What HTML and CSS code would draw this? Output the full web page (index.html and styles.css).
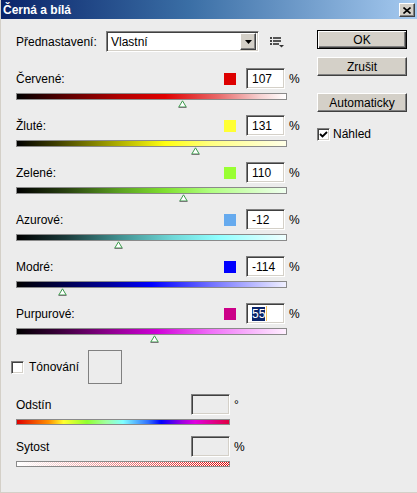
FILE: index.html
```html
<!DOCTYPE html>
<html lang="cs">
<head>
  <meta charset="UTF-8" />
  <title>Černá a bílá</title>
  <link rel="stylesheet" href="styles.css">
</head>
<body>
  <div class="window">
    <div class="titlebar">
      <span class="title">Černá a bílá</span>
      <span class="close">
        <svg width="8" height="7" viewBox="0 0 8 7"><path d="M0.5 0.5 L7.5 6.5 M7.5 0.5 L0.5 6.5" stroke="#000" stroke-width="1.6"/></svg>
      </span>
    </div>

    <div class="body">
      <div class="main">
        <div class="preset-row">
          <span class="preset-label">Přednastavení:</span>
          <div class="select">
            <span class="select-text">Vlastní</span>
            <span class="select-btn">
              <svg width="7" height="4" viewBox="0 0 7 4"><path d="M0 0 H7 L3.5 4 Z" fill="#000"/></svg>
            </span>
          </div>
          <svg class="menu-icon" width="14" height="11" viewBox="0 0 14 11">
            <rect x="0" y="0" width="2" height="2" fill="#444"/><rect x="3" y="0" width="8" height="2" fill="#555"/>
            <rect x="0" y="3" width="2" height="2" fill="#444"/><rect x="3" y="3" width="8" height="2" fill="#555"/>
            <rect x="0" y="6" width="2" height="2" fill="#444"/><rect x="3" y="6" width="6" height="2" fill="#555"/>
            <path d="M9 8 H14 L11.5 10.5 Z" fill="#333"/>
          </svg>
        </div>

        <div class="channel">
          <div class="ch-head">
            <span class="ch-label">Červené:</span>
            <span class="swatch sw-red"></span>
            <span class="field">107</span>
            <span class="unit">%</span>
          </div>
          <div class="bar bar-red"></div>
          <div class="thumb-row"><svg class="thumb" style="--v:0.614" width="9" height="8" viewBox="0 0 9 8"><path d="M4.5 0.8 L8.2 7 H0.8 Z" fill="#fff" stroke="#3a9a4a"/><path d="M0.5 7.5 H8.5" stroke="#777"/></svg></div>
        </div>

        <div class="channel">
          <div class="ch-head">
            <span class="ch-label">Žluté:</span>
            <span class="swatch sw-yellow"></span>
            <span class="field">131</span>
            <span class="unit">%</span>
          </div>
          <div class="bar bar-yellow"></div>
          <div class="thumb-row"><svg class="thumb" style="--v:0.662" width="9" height="8" viewBox="0 0 9 8"><path d="M4.5 0.8 L8.2 7 H0.8 Z" fill="#fff" stroke="#3a9a4a"/><path d="M0.5 7.5 H8.5" stroke="#777"/></svg></div>
        </div>

        <div class="channel">
          <div class="ch-head">
            <span class="ch-label">Zelené:</span>
            <span class="swatch sw-green"></span>
            <span class="field">110</span>
            <span class="unit">%</span>
          </div>
          <div class="bar bar-green"></div>
          <div class="thumb-row"><svg class="thumb" style="--v:0.62" width="9" height="8" viewBox="0 0 9 8"><path d="M4.5 0.8 L8.2 7 H0.8 Z" fill="#fff" stroke="#3a9a4a"/><path d="M0.5 7.5 H8.5" stroke="#777"/></svg></div>
        </div>

        <div class="channel">
          <div class="ch-head">
            <span class="ch-label">Azurové:</span>
            <span class="swatch sw-cyan"></span>
            <span class="field">-12</span>
            <span class="unit">%</span>
          </div>
          <div class="bar bar-cyan"></div>
          <div class="thumb-row"><svg class="thumb" style="--v:0.376" width="9" height="8" viewBox="0 0 9 8"><path d="M4.5 0.8 L8.2 7 H0.8 Z" fill="#fff" stroke="#3a9a4a"/><path d="M0.5 7.5 H8.5" stroke="#777"/></svg></div>
        </div>

        <div class="channel">
          <div class="ch-head">
            <span class="ch-label">Modré:</span>
            <span class="swatch sw-blue"></span>
            <span class="field">-114</span>
            <span class="unit">%</span>
          </div>
          <div class="bar bar-blue"></div>
          <div class="thumb-row"><svg class="thumb" style="--v:0.172" width="9" height="8" viewBox="0 0 9 8"><path d="M4.5 0.8 L8.2 7 H0.8 Z" fill="#fff" stroke="#3a9a4a"/><path d="M0.5 7.5 H8.5" stroke="#777"/></svg></div>
        </div>

        <div class="channel">
          <div class="ch-head">
            <span class="ch-label">Purpurové:</span>
            <span class="swatch sw-magenta"></span>
            <span class="field"><span class="selected">55</span><span class="caret"></span></span>
            <span class="unit">%</span>
          </div>
          <div class="bar bar-magenta"></div>
          <div class="thumb-row"><svg class="thumb" style="--v:0.51" width="9" height="8" viewBox="0 0 9 8"><path d="M4.5 0.8 L8.2 7 H0.8 Z" fill="#fff" stroke="#3a9a4a"/><path d="M0.5 7.5 H8.5" stroke="#777"/></svg></div>
        </div>

        <div class="tint-row">
          <span class="check"></span>
          <span class="tint-label">Tónování</span>
          <span class="tint-swatch"></span>
        </div>

        <div class="tint-field">
          <div class="tf-head">
            <span class="ch-label">Odstín</span>
            <span class="field field-off"></span>
            <span class="unit">°</span>
          </div>
          <div class="bar bar-hue"></div>
        </div>

        <div class="tint-field">
          <div class="tf-head">
            <span class="ch-label">Sytost</span>
            <span class="field field-off"></span>
            <span class="unit">%</span>
          </div>
          <div class="bar bar-sat"></div>
        </div>
      </div>

      <div class="side">
        <button class="btn btn-default">OK</button>
        <button class="btn btn-cancel">Zrušit</button>
        <button class="btn btn-auto">Automaticky</button>
        <label class="preview">
          <span class="check">
            <svg width="9" height="9" viewBox="0 0 9 9"><path d="M1 4 L3.5 6.5 L8 2" fill="none" stroke="#000" stroke-width="1.8"/></svg>
          </span>
          Náhled
        </label>
      </div>
    </div>
  </div>
</body>
</html>
```

FILE: styles.css
```css
* {
  box-sizing: border-box;
}
body {
  margin: 0;
  font-family: "Liberation Sans", Arial, sans-serif;
  font-size: 12px;
  color: #000;
}
.window {
  width: 417px;
  height: 493px;
  background: #ececec;
  border-left: 1px solid #d4d0c8;
  border-bottom: 1px solid #d4d0c8;
}

/* title bar */
.titlebar {
  height: 19px;
  background: linear-gradient(to right, #0a246a, #3a6ea5 45%, #a6caf0);
  display: flex;
  align-items: center;
  justify-content: space-between;
  padding: 0 2px 0 2px;
}
.title {
  color: #fff;
  font-weight: bold;
  font-size: 12px;
}
.close {
  width: 16px;
  height: 14px;
  margin-top: 1px;
  background: #d4d0c8;
  border: 1px solid;
  border-color: #fff #404040 #404040 #fff;
  box-shadow: inset -1px -1px #808080;
  display: flex;
  align-items: center;
  justify-content: center;
}

.body {
  display: flex;
}
.main {
  width: 316px;
  padding: 12px 0 0 15px;
}
.side {
  width: 90px;
  padding-top: 11px;
  display: flex;
  flex-direction: column;
}

/* preset */
.preset-row {
  display: flex;
  align-items: center;
  height: 21px;
  margin-bottom: 16px;
}
.preset-label {
  width: 90px;
}
.select {
  width: 153px;
  height: 21px;
  background: #fff;
  border: 1px solid;
  border-color: #808080 #fff #fff #808080;
  box-shadow: inset 1px 1px #404040, inset -1px -1px #d4d0c8;
  display: flex;
  align-items: center;
  padding: 2px 2px 2px 4px;
}
.select-text {
  flex: 1;
}
.select-btn {
  width: 16px;
  height: 17px;
  background: #d4d0c8;
  border: 1px solid;
  border-color: #fff #404040 #404040 #fff;
  box-shadow: inset -1px -1px #808080;
  display: flex;
  align-items: center;
  justify-content: center;
}
.menu-icon {
  margin-left: 11px;
  margin-top: 2px;
}

/* channel sliders */
.channel {
  width: 285px;
  margin-bottom: 7px;
}
.ch-head, .tf-head {
  display: flex;
  align-items: center;
  height: 21px;
}
.ch-label {
  flex: 1;
}
.swatch {
  width: 12px;
  height: 12px;
  margin-right: 10px;
}
.field {
  width: 39px;
  height: 21px;
  background: #fff;
  border: 1px solid;
  border-color: #808080 #fff #fff #808080;
  box-shadow: inset 1px 1px #404040, inset -1px -1px #d4d0c8;
  padding: 0 0 0 5px;
  display: flex;
  align-items: center;
}
.field-off {
  background: #ececec;
}
.unit {
  width: 12px;
  margin-left: 4px;
}
.selected {
  background: #0a246a;
  color: #fff;
}
.caret {
  width: 1px;
  height: 15px;
  background: #f0c060;
  margin-left: 1px;
}
.sw-red { background: #dd0000; }
.sw-yellow { background: #ffff33; }
.sw-green { background: #99ff33; }
.sw-cyan { background: #66aaee; }
.sw-blue { background: #0000ff; }
.sw-magenta { background: #cc0088; }

.bar {
  width: 271px;
  height: 7px;
  margin-top: 4px;
  border: 1px solid #8a8a8a;
}
.bar-red {
  background: linear-gradient(to right, #000, #5a0000 18%, #b00000 38%, #e00000 55%, #e86a6a 75%, #f5cfcf 90%, #fff);
}
.bar-yellow {
  background: linear-gradient(to right, #000, #404000 15%, #b0b000 38%, #ffff10 55%, #ffff80 72%, #ffffe8);
}
.bar-green {
  background: linear-gradient(to right, #000, #284010 18%, #5aa020 38%, #80e030 55%, #b0ff80 72%, #f0fff0);
}
.bar-cyan {
  background: linear-gradient(to right, #000, #1a3a3a 18%, #409090 38%, #70d8d8 58%, #90ffff 75%, #f0ffff);
}
.bar-blue {
  background: linear-gradient(to right, #000, #000040 15%, #0000a0 35%, #0000ff 50%, #7070ff 72%, #f0f0ff);
}
.bar-magenta {
  background: linear-gradient(to right, #000, #380038 15%, #900090 35%, #d000d8 52%, #f070f8 72%, #fff0ff);
}
.thumb-row {
  height: 8px;
}
.thumb {
  display: block;
  margin-left: calc(var(--v) * 270px - 4px);
}

/* tint */
.tint-row {
  display: flex;
  align-items: center;
  height: 34px;
  margin: 1px 0 0 -5px;
}
.check {
  width: 13px;
  height: 13px;
  background: #fff;
  border: 1px solid;
  border-color: #808080 #fff #fff #808080;
  box-shadow: inset 1px 1px #404040, inset -1px -1px #d4d0c8;
  display: flex;
  align-items: center;
  justify-content: center;
}
.tint-label {
  margin-left: 5px;
  width: 59px;
}
.tint-swatch {
  width: 34px;
  height: 34px;
  border: 1px solid #808080;
}
.tint-field {
  width: 230px;
  margin-top: 10px;
}
.tint-field + .tint-field {
  margin-top: 11px;
}
.bar-hue {
  width: 214px;
  height: 6px;
  background: linear-gradient(to right, #e00000, #ff9000 15%, #ffff30 22%, #90ff30 33%, #a0ffa0 42%, #80ffff 50%, #3070ff 62%, #0000ff 68%, #a000e0 78%, #e000e0 84%, #e00040 100%);
}
.bar-sat {
  width: 214px;
  height: 6px;
  background:
    linear-gradient(to right, #fff, rgba(255, 255, 255, 0)),
    repeating-conic-gradient(#e00000 0 25%, #fff 0 50%) 0 0 / 2px 2px;
}

/* buttons */
.btn {
  width: 90px;
  height: 19px;
  padding: 0;
  font-family: inherit;
  font-size: 12px;
  color: #000;
  background: #d4d0c8;
  border: 1px solid;
  border-color: #fff #404040 #404040 #fff;
  box-shadow: inset -1px -1px #808080;
}
.btn-default {
  border: 1px solid #000;
  box-shadow: inset 1px 1px #fff, inset -1px -1px #404040, inset -2px -2px #808080;
}
.btn-cancel {
  margin-top: 8px;
}
.btn-auto {
  margin-top: 17px;
}
.preview {
  display: flex;
  align-items: center;
  gap: 3px;
  margin-top: 15px;
}
```
